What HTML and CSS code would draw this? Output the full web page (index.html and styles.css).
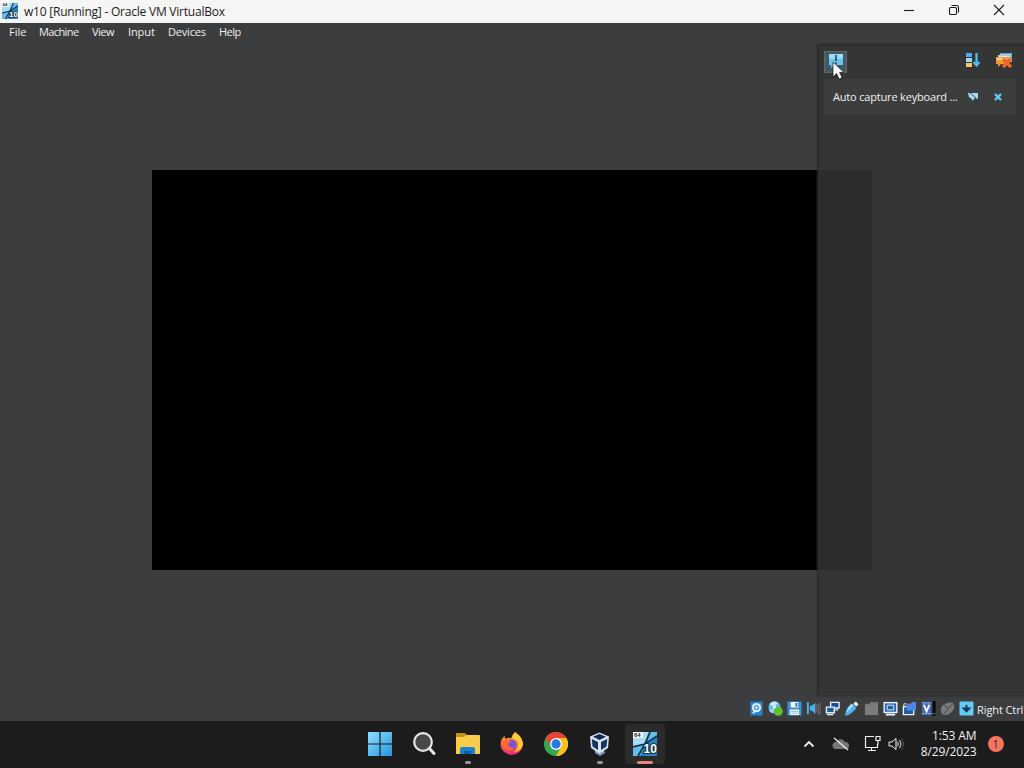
FILE: index.html
```html
<!DOCTYPE html>
<html lang="en">
<head>
    <meta charset="UTF-8">
    <meta name="viewport" content="width=device-width, initial-scale=1.0">
    <title>w10 [Running] - Oracle VM VirtualBox</title>
    <link rel="stylesheet" href="styles.css">
</head>
<body>

    <!-- shared Windows 10 guest icon -->
    <svg class="defs">
        <defs>
            <linearGradient id="blue" x1="0" y1="0" x2="1" y2="1">
                <stop offset="0" stop-color="#8ee0fd"/>
                <stop offset="1" stop-color="#2594df"/>
            </linearGradient>
            <linearGradient id="fire" x1="0" y1="0" x2="0" y2="1">
                <stop offset="0" stop-color="#ffb92e"/>
                <stop offset=".5" stop-color="#ff6a35"/>
                <stop offset="1" stop-color="#e8257d"/>
            </linearGradient>
            <symbol id="guest" viewBox="0 0 24 24">
                <rect width="24" height="24" fill="#65bce9"/>
                <path d="M0 14l11-2 5-12H0z" fill="#a8dcf5"/>
                <path d="M13 12 24 5v19H7z" fill="#2383c4"/>
                <path d="M0 15 12 12 24 4M17 0 12 12 5 24M12 12l6 6" fill="none" stroke="#12354f" stroke-width="1.8"/>
                <rect width="10" height="6" fill="#f2f6f8"/>
                <text x="1" y="5.2" class="tiny">64</text>
                <text x="10.5" y="21" class="ten">10</text>
            </symbol>
        </defs>
    </svg>

    <header class="titlebar">
        <svg class="title-icon" width="16" height="16"><use href="#guest"/></svg>
        <span class="title">w10 [Running] - Oracle VM VirtualBox</span>
        <div class="controls">
            <svg width="12" height="12"><path d="M1 6.5h10"/></svg>
            <svg width="12" height="12"><rect x="1.5" y="3.5" width="7" height="7" rx="1.2"/><path d="M3.5 1.5h5a2 2 0 0 1 2 2v5"/></svg>
            <svg width="12" height="12"><path d="M1 1l10 10M11 1 1 11"/></svg>
        </div>
    </header>

    <nav class="menu">
        <span class="m-file">File</span>
        <span class="m-machine">Machine</span>
        <span class="m-view">View</span>
        <span class="m-input">Input</span>
        <span class="m-devices">Devices</span>
        <span class="m-help">Help</span>
    </nav>

    <main class="viewport">
        <div class="screen"></div>

        <aside class="notices">
            <div class="notice-tools">
                <div class="toggle">
                    <svg width="16" height="16"><path d="M1 1h14v11H7l-4 3v-3H1z" fill="#66c3ee"/><path d="M1 1h14v5H1z" fill="#9adcf5"/><path d="M8 2v6M8 9.5V11" stroke="#15384d" stroke-width="1.5"/></svg>
                </div>
                <svg class="sort" width="16" height="16">
                    <path d="M1 1h6v4H1z" fill="#4aaee8"/><path d="M1 6h6v4H1z" fill="#9adcf8"/><path d="M1 11h6v4H1z" fill="#ffc66b"/>
                    <path d="M11.500 1v12M8.500 10l3 3.500 3-3.500" fill="none" stroke="#50b9ee" stroke-width="2.300"/>
                </svg>
                <svg class="clear" width="18" height="16">
                    <path d="M5 1h12v9H5z" fill="#c6dce5"/><path d="M5 1.500h12M16.500 1v7" stroke="#5da9cf"/>
                    <path d="M3 3h12v3H3z" fill="#d7e4ea" stroke="#4b92b8" stroke-width=".6"/>
                    <path d="M1 5h13v7H6l-3 3v-3H1z" fill="#f49a31"/><path d="M2 6h9v2H2z" fill="#ffd29a"/>
                    <path d="M8 7l8 8M16 7l-8 8" stroke="#f0642c" stroke-width="3.400"/>
                </svg>
            </div>
            <div class="notice">
                <span class="notice-text">Auto capture keyboard ...</span>
                <svg class="expand" width="10" height="10"><path d="M0 1h10v6L7 6 4 9V7L1 5z" fill="#a5daf0"/><path d="M2 1l6 5" stroke="#31586c"/></svg>
                <svg class="dismiss" width="8" height="8"><path d="M1 1l6 6M7 1 1 7" stroke="#5fcdfa" stroke-width="2.300"/></svg>
            </div>
        </aside>

        <svg class="cursor" width="13" height="19"><path d="M1 1v15l3.600-3.400 2.500 5.400 3-1.400-2.500-5.100H12z" fill="#fff" stroke="#111" stroke-width=".7"/></svg>
    </main>

    <footer class="statusbar">
        <div class="indicators">
            <!-- hard disk -->
            <svg viewBox="0 0 16 16"><rect x="1.500" y=".5" width="13" height="15" fill="#2584cd"/><circle cx="8" cy="7" r="5" fill="#dceefa"/><circle cx="8" cy="7" r="2.800" fill="#4a95cd"/><circle cx="8" cy="7" r="1.300" fill="#eef7ff"/><path d="M4 13l4-3" stroke="#eef7ff" stroke-width="1.800"/></svg>
            <!-- optical -->
            <svg viewBox="0 0 16 16"><circle cx="7" cy="7" r="6.500" fill="#62b8ee"/><path d="M7 7 1.500 3.500a6.500 6.500 0 0 1 9-2z" fill="#c5ebfc"/><path d="M7 7 1 10a6 6 0 0 0 4 3z" fill="#9cd8f6"/><circle cx="7" cy="7" r="1.500" fill="#eefaff"/><circle cx="11" cy="11" r="4.800" fill="#5fc32b"/></svg>
            <!-- floppy -->
            <svg viewBox="0 0 16 16"><path d="M.5.500h15v15H.5z" fill="#3594d5"/><path d="M4 1h8v6H4zM3 9h10v6H3z" fill="#f0f9fe"/><path d="M9 2h2v4H9z" fill="#2273b1"/><path d="M4 11h8M4 13h8" stroke="#78abc9" stroke-width=".8"/></svg>
            <!-- audio -->
            <svg viewBox="0 0 16 16"><path d="M1 1h2v13H1zM4 5h2l4-3v12l-4-4H4z" fill="#49b3e9"/><path d="M11.500 4v9M13.300 3v11M15 2v13" stroke="#777b7f" stroke-width="1.200" stroke-dasharray="2 1"/></svg>
            <!-- network -->
            <svg viewBox="0 0 16 16"><path d="M6 1.500h9v6H6z" fill="#1c4b91" stroke="#e5f0fb" stroke-width="1.500"/><path d="M1.500 6.500H10v6H1.500z" fill="#205da7" stroke="#e5f0fb" stroke-width="1.500"/><path d="M2 14.500h7M11 9.500h3" stroke="#e5f0fb" stroke-width="1.200"/></svg>
            <!-- usb -->
            <svg viewBox="0 0 16 16"><path d="M10 3l2.500-2.500 3 3L13 6z" fill="#f0f0ee"/><path d="M8 3q3 0 5 5l-4 4q-3 3-8 4 0-5 3-9z" fill="#4eb3ed"/><path d="M8 3l2 2-7 7q0-3 2-6z" fill="#a7ddfa"/></svg>
            <!-- shared folder -->
            <svg viewBox="0 0 16 16"><path d="M1 3h5l1-2h8v14H1z" fill="#737373"/><path d="M1 4h14v11H1z" fill="#7d7d7d"/></svg>
            <!-- display -->
            <svg viewBox="0 0 16 16"><path d="M.5 1h15v12H.5z" fill="#e9f3fb"/><path d="M2 2.500h12v9H2z" fill="#2468b4"/><path d="M4.500 4.500h7v5h-7z" fill="#285fa4" stroke="#e9f3fb"/><path d="M3 14.500h10" stroke="#e9f3fb" stroke-width="2"/></svg>
            <!-- recording -->
            <svg viewBox="0 0 16 16"><path d="M1.500 6h11v8.500h-11z" fill="#2459a5" stroke="#e6effa" stroke-width="1.500"/><path d="M5 3h4l2-2h4v9H5z" fill="#4f86e5"/><path d="M2 3h3M2 3v3" stroke="#dce9f8"/></svg>
            <!-- cpu -->
            <svg viewBox="0 0 16 16"><path d="M1 1h10v14H1z" fill="#4c68bd"/><path d="M3 4l3 7 3-7" fill="none" stroke="#f4f8ff" stroke-width="2"/><path d="M1 13.500h10M1 2h10" stroke="#a5baf0" stroke-dasharray="2 1"/><path d="M12.500 0h3v16h-3z" fill="#060806"/><path d="M13.300 13.500h1.500" stroke="#99e39c"/></svg>
            <!-- mouse integration -->
            <svg viewBox="0 0 16 16"><path d="M1 10q-1-6 7-8 6-2 7 2 1 7-6 10-7 3-8-4z" fill="#77797a"/><path d="M4 4l5 4 5-5M9 8l-5 6" fill="none" stroke="#55595a" stroke-width="1.200"/></svg>
            <!-- host key -->
            <svg viewBox="0 0 16 16"><rect x=".5" y=".5" width="15" height="15" rx="1" fill="#64c9f4"/><path d="M8 4v4M5 8h6l-3 3z" fill="#123c59" stroke="#123c59" stroke-width="2"/></svg>
        </div>
        <span class="hostkey">Right Ctrl</span>
    </footer>

    <div class="taskbar">
        <div class="apps">
            <div class="app">
                <svg width="24" height="24"><path d="M0 0h11.400v11.400H0zM12.600 0H24v11.400H12.600zM0 12.600h11.400V24H0zM12.600 12.600H24V24H12.600z" fill="url(#blue)"/></svg>
            </div>
            <div class="app">
                <svg width="24" height="24"><circle cx="11" cy="10" r="8.800" fill="#484848" stroke="#e7e7e7" stroke-width="2.200"/><path d="M17.500 16.500l4.500 5" stroke="#e7e7e7" stroke-width="3" stroke-linecap="round"/></svg>
            </div>
            <div class="app open">
                <svg width="24" height="24"><path d="M0 2q0-1 1-1h7l3 2h12q1 0 1 1v18H0z" fill="#f8cc48"/><path d="M0 5V2q0-1 1-1h7l3 2-3 2z" fill="#c89113"/><path d="M4 22v-5q0-2 2-2h11q2 0 2 2v5z" fill="#1683cb"/><path d="M8 19h7v3H8z" fill="#0b609e"/></svg>
            </div>
            <div class="app">
                <svg width="24" height="24"><path d="M15 0q2 2 2 4 1-1 1-2 5 5 5 11a11.300 11 0 0 1-22.500 0q0-6 4-9l1 3q3-2 6-1 1-4 3.500-6z" fill="url(#fire)"/><path d="M15 0q8 6 8 13-3 7-9 7 6-5 3-11l-5-3z" fill="#ffca32"/><circle cx="11.500" cy="12.500" r="5" fill="#7654d7"/><path d="M3 9q5-2 8 1l-3 2q1 4 6 4-6 5-10 0z" fill="#ff673b"/></svg>
            </div>
            <div class="app">
                <svg width="24" height="24"><circle cx="12" cy="12" r="12" fill="#35a853"/><path d="M1.600 6A12 12 0 0 1 22.400 6H12L7 15z" fill="#e84435"/><path d="M22.400 6A12 12 0 0 1 12 24l5-9-5-9z" fill="#fbc116"/><circle cx="12" cy="12" r="6" fill="#fff"/><circle cx="12" cy="12" r="4.700" fill="#287be5"/></svg>
            </div>
            <div class="app open">
                <svg width="24" height="24"><path d="M7 18h9l1 3-5 3-5-3z" fill="#8998bd"/><path d="M11.500.500l9.500 4-1 11.500-8.500 5.500L3 16 2 4.500z" fill="#d4e2f4"/><path d="M11.500 2l6.500 2.700-6.500 3.300L5 4.700z" fill="#142c4b"/><path d="M3.800 7l6.200 3v8l-5.500-3.500zM19.200 7 13 10v8l5.500-3.500z" fill="#15345e"/></svg>
            </div>
            <div class="app active">
                <svg width="24" height="24"><use href="#guest"/></svg>
            </div>
        </div>

        <div class="tray">
            <svg class="chevron" width="12" height="8"><path d="M1.500 6.500 6 2l4.500 4.500" fill="none" stroke="#eee" stroke-width="1.800"/></svg>
            <svg class="cloud" width="18" height="14"><path d="M4 12a3.500 3.500 0 0 1 0-7 5 5 0 0 1 9 0 3.500 3.500 0 0 1 1 7z" fill="#777"/><path d="M2 1l14 12" stroke="#eee" stroke-width="1.300"/></svg>
            <svg class="net" width="17" height="17"><path d="M10 1.500H1.500v11h12V9M7.500 13v3M4 15.500h8" fill="none" stroke="#eee" stroke-width="1.200"/><path d="M12 1.500h4v4h-4zM14 5.500v4" fill="none" stroke="#eee" stroke-width="1.200"/></svg>
            <svg class="sound" width="17" height="14"><path d="M1 5h3l4-3.500v11L4 9H1z" fill="none" stroke="#eee"/><path d="M9.500 5q1.500 2 0 4M11.500 3q3 4 0 8" fill="none" stroke="#eee"/><path d="M13.500 1.500q4 5.500 0 11" fill="none" stroke="#555"/></svg>
            <div class="clock">
                <span class="time">1:53 AM</span>
                <span class="date">8/29/2023</span>
            </div>
            <span class="badge">1</span>
        </div>
    </div>

</body>
</html>
```
FILE: styles.css
```css
* {
    box-sizing: border-box;
}
body {
    margin: 0;
    width: 1024px;
    height: 768px;
    display: flex;
    flex-direction: column;
    overflow: hidden;
    background: #3c3d3f;
    color: #f0f0f0;
    font-family: "Open Sans", "Noto Sans", sans-serif;
    font-size: 11px;
    white-space: nowrap;
}
svg {
    display: block;
    flex-shrink: 0;
}
.defs {
    position: absolute;
    width: 0;
    height: 0;
}
.tiny {
    font: bold 6px "Liberation Sans", sans-serif;
    fill: #222;
}
.ten {
    font: bold 12px "Liberation Sans", sans-serif;
    fill: #fff;
    stroke: #173042;
    stroke-width: 2px;
    paint-order: stroke;
}

/* window title */
.titlebar {
    height: 23px;
    display: flex;
    align-items: center;
    padding: 0 19px 0 2px;
    background: #f5f5f5;
    color: #1b1b1b;
}
.title-icon {
    margin-top: -1px;
}
.title {
    margin-left: 6px;
    font-size: 12px;
    letter-spacing: -0.22px;
}
.controls {
    display: flex;
    gap: 33px;
    margin-left: auto;
    margin-top: -3px;
}
.controls svg {
    fill: none;
    stroke: #1b1b1b;
    stroke-width: 1.1px;
}

/* menu */
.menu {
    height: 19px;
    display: flex;
    padding-left: 9px;
    line-height: 18px;
}
.m-file {
    width: 30px;
}
.m-machine {
    width: 53px;
    letter-spacing: -0.6px;
}
.m-view {
    width: 36px;
    letter-spacing: -0.5px;
}
.m-input {
    width: 40px;
    letter-spacing: -0.1px;
}
.m-devices {
    width: 51px;
    letter-spacing: -0.2px;
}
.m-help {
    letter-spacing: -0.5px;
}

/* guest display */
.viewport {
    position: relative;
    height: 654px;
}
.screen {
    width: 720px;
    height: 400px;
    margin: 128px auto 0 152px;
    background: #000;
}
.viewport::before {
    content: "";
    display: table;
}
.notices {
    position: absolute;
    left: 818px;
    top: 3px;
    width: 206px;
    height: 650px;
    padding: 6px 8px 0 6px;
    background: rgba(51, 53, 52, .85);
    box-shadow: 0 0 2px 1px #292b2a, inset 1px 1px #292b2a;
}
.notice-tools {
    height: 28px;
    display: flex;
    align-items: flex-start;
}
.toggle {
    width: 23px;
    height: 22px;
    padding: 1px 3px;
    background: #455865;
    border: 1px solid #686561;
}
.sort {
    margin: 1px 0 0 118px;
}
.clear {
    margin: 1px 0 0 14px;
}
.notice {
    height: 35px;
    display: flex;
    align-items: center;
    padding-left: 9px;
    background: #3c3e3d;
}
.notice-text {
    width: 126px;
    letter-spacing: -0.18px;
}
.expand {
    margin-left: 9px;
}
.dismiss {
    margin-left: 16px;
}
.cursor {
    position: absolute;
    left: 832px;
    top: 19px;
}

/* status bar */
.statusbar {
    height: 25px;
    display: flex;
    align-items: center;
    padding-left: 749px;
}
.indicators {
    display: flex;
    gap: 4.1px;
}
.indicators svg {
    width: 15px;
    height: 15px;
}
.hostkey {
    margin: 1px 0 0 3px;
    letter-spacing: -0.1px;
}

/* taskbar */
.taskbar {
    height: 47px;
    display: flex;
    align-items: center;
    padding: 0 0 2px 360px;
    background: #1c1c1c;
}
.apps {
    display: flex;
    gap: 4.1px;
}
.app {
    position: relative;
    width: 40px;
    height: 40px;
    display: flex;
    align-items: center;
    justify-content: center;
    border-radius: 4px;
}
.open::after,
.active::after {
    content: "";
    position: absolute;
    bottom: 0;
    width: 6px;
    height: 3px;
    border-radius: 2px;
    background: #989898;
}
.active {
    background: #2b2b2b;
}
.active::after {
    width: 16px;
    background: #ee8279;
}
.tray {
    flex: 1;
    display: flex;
    align-items: center;
    padding-left: 138px;
}
.cloud {
    margin-left: 17px;
}
.net {
    margin-left: 14px;
}
.sound {
    margin-left: 7px;
}
.clock {
    width: 72px;
    display: flex;
    flex-direction: column;
    align-items: flex-end;
    font-size: 12px;
    line-height: 16px;
    letter-spacing: -0.1px;
}
.badge {
    width: 16px;
    height: 16px;
    margin-left: 11px;
    border-radius: 50%;
    background: #f37561;
    color: #302020;
    font-size: 10px;
    line-height: 16px;
    text-align: center;
}
```
